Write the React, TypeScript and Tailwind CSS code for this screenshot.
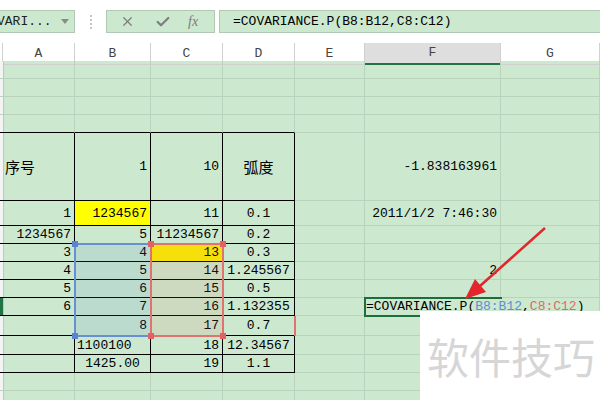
import { X, Check } from "lucide-react";

const mono = "font-['Liberation_Mono','Noto_Sans_CJK_SC',monospace]";
const cjk = "font-['Noto_Sans_CJK_SC',sans-serif]";
const gridCols = "grid grid-cols-[3px_72px_76px_72px_72px_70px_136px_1fr]";

type Cell = { t: string; a?: "l" | "r" | "c"; bg?: string; zh?: boolean };
type Row = { h: string; table?: boolean; top?: boolean; mark?: boolean; cells?: Record<number, Cell> };

const rows: Row[] = [
  { h: "h-[18px]" },
  { h: "h-[18px]" },
  { h: "h-[18px]" },
  { h: "h-[18px]", top: true },
  {
    h: "h-[68px]",
    table: true,
    cells: {
      1: { t: "序号", a: "l", zh: true },
      2: { t: "1" },
      3: { t: "10" },
      4: { t: "弧度", a: "c", zh: true },
      6: { t: "-1.838163961" },
    },
  },
  {
    h: "h-[25px]",
    table: true,
    cells: {
      1: { t: "1" },
      2: { t: "1234567", bg: "bg-[#ffff00]" },
      3: { t: "11" },
      4: { t: "0.1", a: "c" },
      6: { t: "2011/1/2 7:46:30" },
    },
  },
  { h: "h-[18px]", table: true, cells: { 1: { t: "1234567" }, 2: { t: "5" }, 3: { t: "11234567" }, 4: { t: "0.2", a: "c" } } },
  { h: "h-[18px]", table: true, cells: { 1: { t: "3" }, 2: { t: "4" }, 3: { t: "13", bg: "bg-[#fbee00]" }, 4: { t: "0.3", a: "c" } } },
  { h: "h-[18px]", table: true, cells: { 1: { t: "4" }, 2: { t: "5" }, 3: { t: "14" }, 4: { t: "1.245567", a: "c" }, 6: { t: "2" } } },
  { h: "h-[18px]", table: true, cells: { 1: { t: "5" }, 2: { t: "6" }, 3: { t: "15" }, 4: { t: "0.5", a: "c" } } },
  { h: "h-[18px]", table: true, mark: true, cells: { 1: { t: "6" }, 2: { t: "7" }, 3: { t: "16" }, 4: { t: "1.132355", a: "c" } } },
  { h: "h-[20px]", table: true, cells: { 2: { t: "8" }, 3: { t: "17" }, 4: { t: "0.7", a: "c" } } },
  { h: "h-[19px]", table: true, cells: { 2: { t: "1100100", a: "l" }, 3: { t: "18" }, 4: { t: "12.34567", a: "c" } } },
  { h: "h-[18px]", table: true, cells: { 2: { t: "1425.00", a: "c" }, 3: { t: "19" }, 4: { t: "1.1", a: "c" } } },
  { h: "h-[18px]" },
  { h: "h-[18px]" },
];

function SheetRow({ row }: { row: Row }) {
  return (
    <div className={`${gridCols} ${row.h}`}>
      {[0, 1, 2, 3, 4, 5, 6, 7].map((ci) => {
        const c = row.cells?.[ci];
        const blackB = (row.table || row.top) && ci <= 4;
        const blackR = row.table && ci >= 1 && ci <= 4;
        const strip = ci === 0;
        const align =
          c?.a === "l" ? "justify-start pl-[2px]" : c?.a === "c" ? "justify-center" : "justify-end pr-[3px]";
        return (
          <div
            key={ci}
            className={[
              "flex items-center border-r border-b whitespace-nowrap overflow-visible",
              strip ? (row.mark ? "bg-[#217346]" : "bg-[#f4f4f4]") : c?.bg ?? "",
              strip ? "border-r-[#c4c4c4]" : blackR ? "border-r-black" : "border-r-[#b9d3bc]",
              blackB ? "border-b-black" : "border-b-[#b9d3bc]",
              align,
            ].join(" ")}
          >
            {c && (
              <span className={c.zh ? `${cjk} text-[15px] leading-none` : `${mono} text-[13px] leading-none`}>
                {c.t}
              </span>
            )}
          </div>
        );
      })}
    </div>
  );
}

export default function App() {
  return (
    <div className="relative w-[600px] h-[400px] overflow-hidden bg-[#cce8cf] text-black">
      {/* formula bar */}
      <div className="h-[43px] bg-white flex items-start pt-[10px]">
        <div className="w-[75px] h-[23px] bg-[#cce8cf] border border-l-0 border-[#b3c7b5] flex items-center overflow-hidden">
          <span className={`${mono} text-[13px] ml-[-3px] text-[#222]`}>VARI...</span>
          <svg width="8" height="5" viewBox="0 0 8 5" className="ml-auto mr-[5px]">
            <polygon points="0,0 8,0 4,5" fill="#8a8a8a" />
          </svg>
        </div>
        <div className="w-[31px] h-[23px] flex items-center justify-center">
          <div className="h-[14px] border-l-2 border-dotted border-[#c4c4c4]" />
        </div>
        <div className="w-[109px] h-[23px] bg-[#cce8cf] border border-[#b3c7b5] flex items-center text-[#7d7d7d]">
          <X size={15} strokeWidth={2} className="ml-[13px]" />
          <Check size={16} strokeWidth={3.2} className="ml-[20px]" />
          <span className="ml-[17px] font-['Liberation_Serif',serif] italic text-[14px] leading-none">fx</span>
        </div>
        <div className="ml-[4px] flex-1 h-[23px] bg-[#cce8cf] border border-r-0 border-[#b3c7b5] flex items-center pl-[13px]">
          <span className={`${mono} text-[13px]`}>=COVARIANCE.P(B8:B12,C8:C12)</span>
        </div>
      </div>

      {/* column headers */}
      <div className={`${gridCols} h-[18px] bg-white ${mono} text-[13px] text-[#444]`}>
        {["", "A", "B", "C", "D", "E", "F", "G"].map((l, i) => (
          <div
            key={i}
            className={
              i === 6
                ? "flex items-center justify-center bg-[#dedede] border-r border-[#d0d0d0] border-b-2 border-b-[#217346]"
                : "flex items-center justify-center border-r border-b border-[#d0d0d0]"
            }
          >
            {l}
          </div>
        ))}
      </div>

      {rows.map((r, i) => (
        <SheetRow key={i} row={r} />
      ))}

      {/* reference selections */}
      <div className="absolute left-[74px] top-[243px] w-[78px] h-[94px] border-2 border-[#6790d4] bg-[rgba(70,130,210,0.12)]">
        <div className="absolute -left-[4px] -top-[4px] w-[6px] h-[6px] bg-[#5a84cf]" />
        <div className="absolute -right-[4px] -top-[4px] w-[6px] h-[6px] bg-[#5a84cf]" />
        <div className="absolute -left-[4px] -bottom-[4px] w-[6px] h-[6px] bg-[#5a84cf]" />
        <div className="absolute -right-[4px] -bottom-[4px] w-[6px] h-[6px] bg-[#5a84cf]" />
      </div>
      <div className="absolute left-[150px] top-[243px] w-[74px] h-[94px] border-2 border-[#e07272] bg-[rgba(215,120,90,0.12)]">
        <div className="absolute -left-[4px] -top-[4px] w-[6px] h-[6px] bg-[#e06262]" />
        <div className="absolute -right-[4px] -top-[4px] w-[6px] h-[6px] bg-[#e06262]" />
        <div className="absolute -left-[4px] -bottom-[4px] w-[6px] h-[6px] bg-[#e06262]" />
        <div className="absolute -right-[4px] -bottom-[4px] w-[6px] h-[6px] bg-[#e06262]" />
      </div>
      <div className="absolute left-[294px] top-[316px] w-[2px] h-[20px] bg-[#e07272]" />

      {/* in-cell editor */}
      <div className="absolute left-[364px] top-[297px] w-[138px] h-[20px] border-2 border-r-0 border-[#1e6e3d] bg-[#cce8cf]" />
      <div className={`absolute left-[366px] top-[298px] h-[18px] flex items-center whitespace-nowrap ${mono} text-[13px]`}>
        <span>=COVARIANCE.P(</span>
        <span className="text-[#5b8fd6]">B8:B12</span>
        <span>,</span>
        <span className="text-[#e06a6a]">C8:C12</span>
        <span>)</span>
      </div>

      {/* arrow */}
      <svg className="absolute left-0 top-0 pointer-events-none" width="600" height="400">
        <line x1="545" y1="228" x2="480" y2="286" stroke="#e3262b" strokeWidth="2.5" />
        <polygon points="465,299 486,292 475,279" fill="#e3262b" />
      </svg>

      {/* watermark */}
      <div className="absolute left-[420px] top-[311px] w-[180px] h-[89px] bg-white pl-[7px] pt-[24px]">
        <span className={`${cjk} text-[42px] leading-none text-[#d6d6d6]`}>软件技巧</span>
      </div>
    </div>
  );
}
